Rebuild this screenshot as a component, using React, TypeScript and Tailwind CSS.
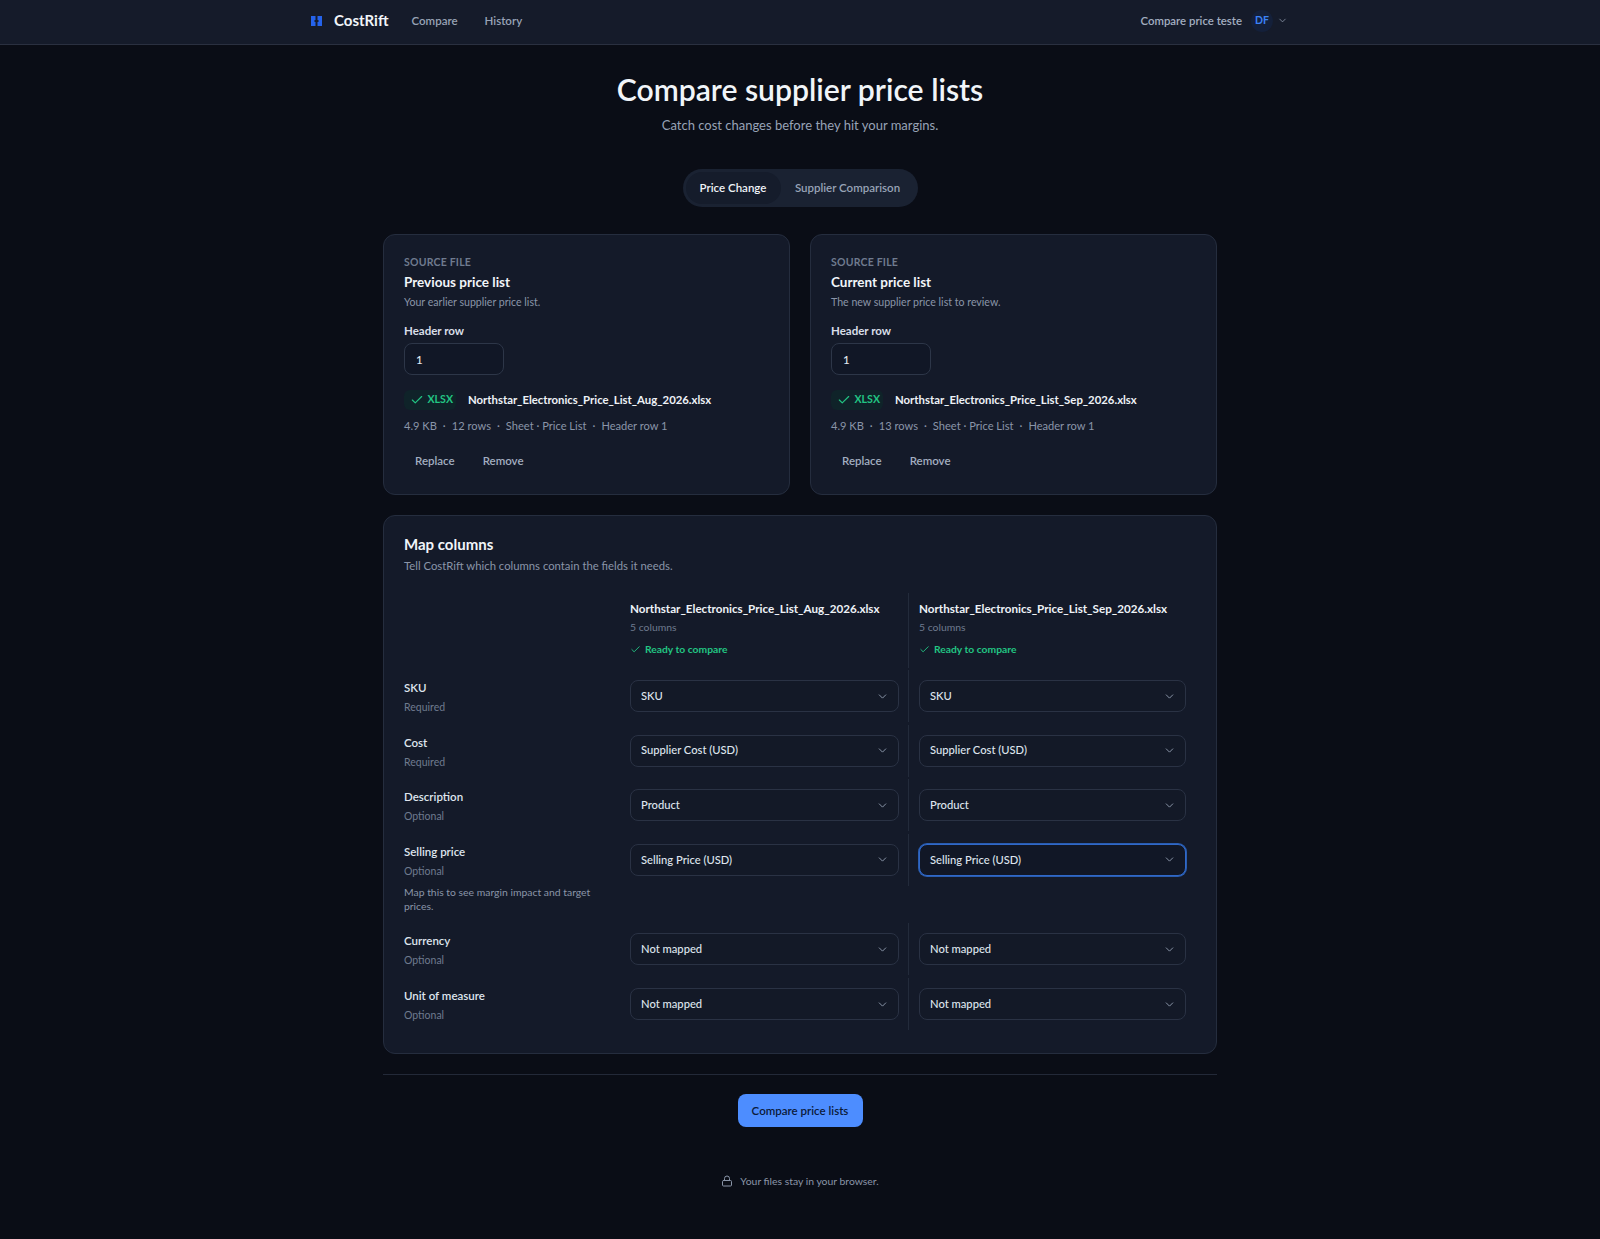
import { Check, ChevronDown, Lock } from "lucide-react";

const F = "Northstar_Electronics_Price_List_";

function Dot() {
  return <span className="mx-[6px]">·</span>;
}

function SourceCard({ title, desc, file, rows }: { title: string; desc: string; file: string; rows: string }) {
  return (
    <section className="rounded-xl border border-[#252d3e] bg-[#141a29] p-5">
      <div className="-mt-px text-[10.5px] leading-4 font-bold tracking-[0.02em] text-[#6f7b8f] uppercase">Source file</div>
      <h2 className="mt-[2px] text-[13.5px] leading-5 font-bold text-[#f1f5f9]">{title}</h2>
      <p className="mt-[2px] text-[10.6px] leading-4 text-[#8a95a8]">{desc}</p>
      <label className="mt-[13px] block text-[11.5px] leading-4 font-bold text-[#d9dfe8]">Header row</label>
      <input
        readOnly
        value="1"
        className="mt-1 block h-8 w-[100px] rounded-lg border border-[#2d3648] bg-[#111726] px-[11px] text-[11.5px] font-medium text-[#e2e8f0] outline-none"
      />
      <div className="mt-[15px] flex h-5 items-center">
        <span className="flex h-5 w-[52px] items-center gap-[3.5px] rounded-md bg-[#0f2329] pl-[6px] text-[10.6px] font-bold text-[#22c583]">
          <Check size={14} strokeWidth={2} />
          XLSX
        </span>
        <span className="ml-[12px] text-[11.35px] font-bold text-[#eef2f7]">{file}</span>
      </div>
      <div className="mt-[8px] text-[11.1px] leading-4 text-[#8a95a8]">
        4.9 KB
        <Dot />
        {rows} rows
        <Dot />
        Sheet · Price List
        <Dot />
        Header row 1
      </div>
      <div className="mt-[13px] -mb-px flex gap-[6px]">
        <button className="h-7 rounded-lg px-[11px] text-[11.5px] font-semibold text-[#a3aec0]">Replace</button>
        <button className="h-7 rounded-lg px-[11px] text-[11.5px] font-semibold text-[#a3aec0]">Remove</button>
      </div>
    </section>
  );
}

function Select({ value, focused }: { value: string; focused?: boolean }) {
  return (
    <button
      className={
        focused
          ? "flex h-8 w-full items-center justify-between rounded-lg border border-[#3068c8] bg-[#111726] pr-[9px] pl-[10px] text-[11.2px] font-medium text-[#dfe5ee] ring-1 ring-[#2a5db0]"
          : "flex h-8 w-full items-center justify-between rounded-lg border border-[#2a3244] bg-[#131927] pr-[9px] pl-[10px] text-[11.2px] font-medium text-[#dfe5ee]"
      }
    >
      <span>{value}</span>
      <ChevronDown size={13} strokeWidth={1.75} className="text-[#8f9aad]" />
    </button>
  );
}

function Row({
  name,
  hint,
  note,
  left,
  right,
  focused,
}: {
  name: string;
  hint: string;
  note?: string;
  left: string;
  right: string;
  focused?: boolean;
}) {
  return (
    <div className={note ? "grid h-[89.5px] grid-cols-[216px_288px_288px] items-start" : "grid h-[54.67px] grid-cols-[216px_288px_288px] items-start"}>
      <div className="pt-[10px]">
        <div className="text-[11.5px] leading-4 font-semibold text-[#dfe5ee]">{name}</div>
        <div className="mt-[3px] text-[10.5px] leading-4 text-[#6f7b8f]">{hint}</div>
        {note && <div className="mt-[6px] w-[190px] text-[10.4px] leading-[14px] text-[#8a95a8]">{note}</div>}
      </div>
      <div className="py-[10px] pr-[9px] pl-[10px]">
        <Select value={left} />
      </div>
      <div className="h-[52px] border-l border-[#232b3b] py-[10px] pr-[10px] pl-[10px]">
        <Select value={right} focused={focused} />
      </div>
    </div>
  );
}

function ColHead({ file, border }: { file: string; border?: boolean }) {
  return (
    <div className={border ? "h-[75px] border-l border-[#232b3b] px-[10px] pt-2" : "h-[75px] px-[10px] pt-2"}>
      <div className="text-[11.65px] leading-4 font-bold text-[#eef2f7]">{file}</div>
      <div className="mt-[2px] text-[10.4px] leading-4 text-[#6f7b8f]">5 columns</div>
      <div className="mt-[6px] flex items-center gap-[4px] text-[10.3px] leading-4 font-bold text-[#22c583]">
        <Check size={11} strokeWidth={2} />
        Ready to compare
      </div>
    </div>
  );
}

export default function App() {
  return (
    <div className="min-h-screen bg-[#0a0d16] font-['Lato',sans-serif] text-[#e2e8f0]">
      <header className="h-[45px] border-b border-[#2a3040] bg-[#151b2a]">
        <div className="mx-auto flex h-[41px] w-[1024px] items-center justify-between px-6">
          <div className="flex items-center">
            <svg width="11" height="10" viewBox="0 0 11 10" className="-ml-px">
              <path d="M0 0h4.5v4H3.5v2h1v4H0zM6.5 0H11v10H6.5V6h1V4h-1z" fill="#2563eb" />
            </svg>
            <span className="ml-[12px] text-[15px] font-bold text-[#f1f5f9]">CostRift</span>
            <a className="ml-[23px] text-[11.5px] font-semibold text-[#98a3b6]">Compare</a>
            <a className="ml-[27px] text-[11.5px] font-semibold text-[#98a3b6]">History</a>
          </div>
          <div className="flex items-center">
            <span className="text-[11.4px] font-semibold text-[#a3aec0]">Compare price teste</span>
            <span className="ml-[9px] flex h-[22px] w-[22px] items-center justify-center rounded-full bg-[#14203a] text-[10.5px] font-bold text-[#3b82f6]">DF</span>
            <ChevronDown size={11} strokeWidth={1.75} className="ml-[4px] text-[#8f9aad]" />
          </div>
        </div>
      </header>

      <main className="mx-auto w-[834px] pt-[26px]">
        <h1 className="text-center text-[30.15px] leading-9 font-semibold text-[#f1f5f9]">Compare supplier price lists</h1>
        <p className="mt-2 text-center text-[13px] leading-5 text-[#98a3b6]">Catch cost changes before they hit your margins.</p>

        <div className="mt-[34px] flex justify-center">
          <div className="flex h-[38px] w-[235px] items-center rounded-full bg-[#1a2232] p-[3px]">
            <button className="h-[32px] w-[95px] rounded-full bg-[#151c2b] text-[11.5px] font-semibold text-[#eef2f7]">Price Change</button>
            <button className="h-[32px] flex-1 text-[11.5px] font-semibold text-[#98a3b6]">Supplier Comparison</button>
          </div>
        </div>

        <div className="mt-[27px] grid grid-cols-2 gap-5">
          <SourceCard title="Previous price list" desc="Your earlier supplier price list." file={F + "Aug_2026.xlsx"} rows="12" />
          <SourceCard title="Current price list" desc="The new supplier price list to review." file={F + "Sep_2026.xlsx"} rows="13" />
        </div>

        <section className="mt-5 rounded-xl border border-[#252d3e] bg-[#141a29] px-5 pt-[18px] pb-5">
          <h2 className="text-[15px] leading-5 font-bold text-[#f1f5f9]">Map columns</h2>
          <p className="mt-[4px] text-[11.3px] leading-4 text-[#8a95a8]">Tell CostRift which columns contain the fields it needs.</p>

          <div className="mt-[19px]">
            <div className="grid grid-cols-[216px_288px_288px]">
              <div />
              <ColHead file={F + "Aug_2026.xlsx"} />
              <ColHead file={F + "Sep_2026.xlsx"} border />
            </div>
            <div className="mt-[2px]">
              <Row name="SKU" hint="Required" left="SKU" right="SKU" />
              <Row name="Cost" hint="Required" left="Supplier Cost (USD)" right="Supplier Cost (USD)" />
              <Row name="Description" hint="Optional" left="Product" right="Product" />
              <Row
                name="Selling price"
                hint="Optional"
                note="Map this to see margin impact and target prices."
                left="Selling Price (USD)"
                right="Selling Price (USD)"
                focused
              />
              <Row name="Currency" hint="Optional" left="Not mapped" right="Not mapped" />
              <Row name="Unit of measure" hint="Optional" left="Not mapped" right="Not mapped" />
            </div>
          </div>
        </section>

        <div className="mt-5 border-t border-[#232938]" />

        <div className="mt-[19px] flex justify-center">
          <button className="h-[33px] w-[125px] rounded-lg bg-[#4d8dff] text-[11.5px] font-semibold text-[#0b1a3a]">Compare price lists</button>
        </div>

        <div className="mt-[46px] flex items-center justify-center gap-[7px] text-[10.4px] leading-4 text-[#8a95a8]">
          <Lock size={12} strokeWidth={2} />
          Your files stay in your browser.
        </div>
      </main>
    </div>
  );
}
